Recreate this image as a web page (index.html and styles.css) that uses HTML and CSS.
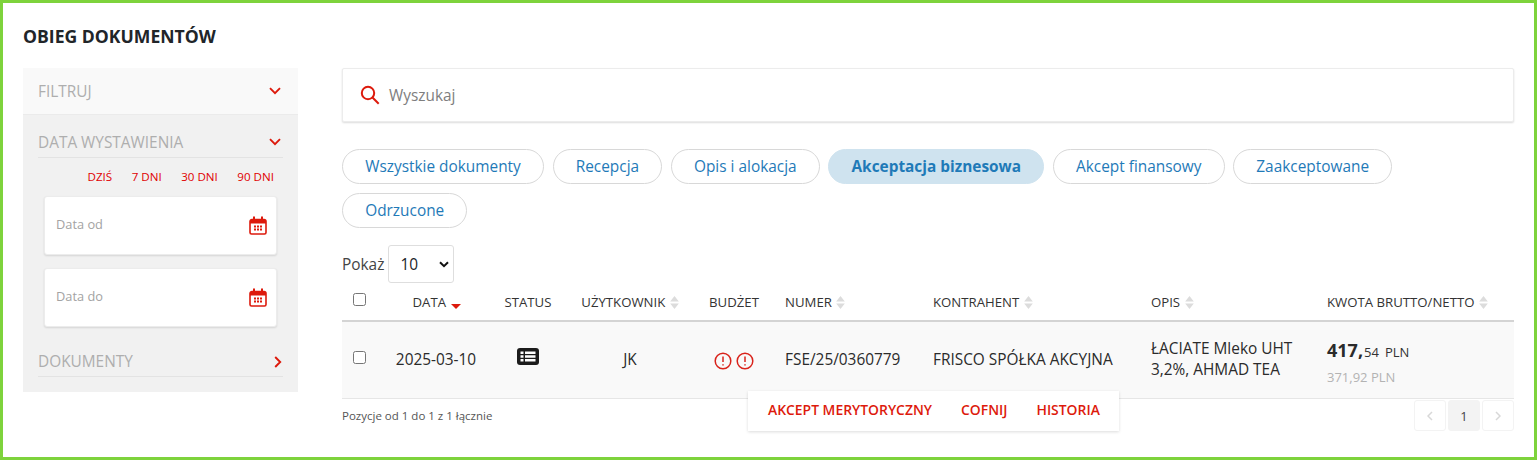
FILE: index.html
```html
<!DOCTYPE html>
<html lang="pl">
<head>
<meta charset="utf-8">
<title>Obieg dokumentów</title>
<link rel="stylesheet" href="styles.css">
</head>
<body>
<div class="frame">
  <h1 class="title">OBIEG DOKUMENTÓW</h1>
  <div class="columns">
    <aside class="sidebar">
      <div class="filter-head">
        <span>FILTRUJ</span>
        <svg class="chev" viewBox="0 0 12 8"><path d="M1 1.200l5 5 5-5" /></svg>
      </div>
      <div class="filter-body">
        <div class="section-head">
          <span>DATA WYSTAWIENIA</span>
          <svg class="chev" viewBox="0 0 12 8"><path d="M1 1.200l5 5 5-5" /></svg>
        </div>
        <div class="quick">
          <a>DZIŚ</a><a>7 DNI</a><a>30 DNI</a><a>90 DNI</a>
        </div>
        <div class="date-box">
          <span>Data od</span>
          <svg class="cal" viewBox="0 0 18 19"><path class="cal-o" d="M1 5.500a2 2 0 0 1 2-2h12a2 2 0 0 1 2 2v11a1.500 1.500 0 0 1-1.500 1.500h-13A1.500 1.500 0 0 1 1 16.500z"/><path class="cal-f" d="M1 4h16v3.500H1zM4 0.500h2v4H4zM12 0.500h2v4h-2zM5 9.500h2v2H5zM8 9.500h2v2H8zM11 9.500h2v2h-2zM5 12.500h2v2H5zM8 12.500h2v2H8zM11 12.500h2v2h-2z"/></svg>
        </div>
        <div class="date-box">
          <span>Data do</span>
          <svg class="cal" viewBox="0 0 18 19"><path class="cal-o" d="M1 5.500a2 2 0 0 1 2-2h12a2 2 0 0 1 2 2v11a1.500 1.500 0 0 1-1.500 1.500h-13A1.500 1.500 0 0 1 1 16.500z"/><path class="cal-f" d="M1 4h16v3.500H1zM4 0.500h2v4H4zM12 0.500h2v4h-2zM5 9.500h2v2H5zM8 9.500h2v2H8zM11 9.500h2v2h-2zM5 12.500h2v2H5zM8 12.500h2v2H8zM11 12.500h2v2h-2z"/></svg>
        </div>
        <div class="section-head docs">
          <span>DOKUMENTY</span>
          <svg class="chev-r" viewBox="0 0 8 12"><path d="M1.200 1l5 5-5 5" /></svg>
        </div>
      </div>
    </aside>
    <main class="main">
      <div class="search">
        <svg class="search-icon" viewBox="0 0 20 20"><circle cx="8" cy="8" r="6.200"/><path d="M12.500 12.500l6.200 6.200"/></svg>
        <span>Wyszukaj</span>
      </div>
      <div class="tabs">
        <a class="tab">Wszystkie dokumenty</a>
        <a class="tab">Recepcja</a>
        <a class="tab">Opis i alokacja</a>
        <a class="tab active">Akceptacja biznesowa</a>
        <a class="tab">Akcept finansowy</a>
        <a class="tab">Zaakceptowane</a>
        <a class="tab">Odrzucone</a>
      </div>
      <div class="length">
        <span>Pokaż</span>
        <div class="select"><span>10</span><svg viewBox="0 0 10 7"><path d="M1 1.200l4 4 4-4"/></svg></div>
      </div>
      <div class="table-wrap">
        <table class="docs-table">
          <colgroup>
            <col class="c1"><col class="c2"><col class="c3"><col class="c4"><col class="c5"><col class="c6"><col class="c7"><col class="c8"><col class="c9">
          </colgroup>
          <thead>
            <tr>
              <th class="first"><span class="check"></span></th>
              <th class="date-h">DATA <svg class="sort-down" viewBox="0 0 10 5"><path d="M0 0h10L5 5z"/></svg></th>
              <th>STATUS</th>
              <th>UŻYTKOWNIK <svg class="sort" viewBox="0 0 8 12"><path d="M4 0l4 5H0zM0 7h8l-4 5z"/></svg></th>
              <th>BUDŻET</th>
              <th class="left">NUMER <svg class="sort" viewBox="0 0 8 12"><path d="M4 0l4 5H0zM0 7h8l-4 5z"/></svg></th>
              <th class="left">KONTRAHENT <svg class="sort" viewBox="0 0 8 12"><path d="M4 0l4 5H0zM0 7h8l-4 5z"/></svg></th>
              <th class="left">OPIS <svg class="sort" viewBox="0 0 8 12"><path d="M4 0l4 5H0zM0 7h8l-4 5z"/></svg></th>
              <th class="left">KWOTA BRUTTO/NETTO <svg class="sort" viewBox="0 0 8 12"><path d="M4 0l4 5H0zM0 7h8l-4 5z"/></svg></th>
            </tr>
          </thead>
          <tbody>
            <tr>
              <td class="first"><span class="check"></span></td>
              <td>2025-03-10</td>
              <td>
                <svg class="status" viewBox="0 0 22 17"><rect width="22" height="17" rx="3"/><path class="status-l" d="M3.500 3.500h3v2.500h-3zM8 3.500h10.500v2.500H8zM3.500 7.300h3v2.500h-3zM8 7.300h10.500v2.500H8zM3.500 11h3v2.500h-3zM8 11h10.500v2.500H8z"/></svg>
              </td>
              <td>JK</td>
              <td>
                <span class="alerts">
                  <svg class="alert" viewBox="0 0 18 18"><circle cx="9" cy="9" r="7.800"/><path d="M9 4.500v5.500M9 12.300v1.300"/></svg>
                  <svg class="alert" viewBox="0 0 18 18"><circle cx="9" cy="9" r="7.800"/><path d="M9 4.500v5.500M9 12.300v1.300"/></svg>
                </span>
              </td>
              <td class="left">FSE/25/0360779</td>
              <td class="left">FRISCO SPÓŁKA AKCYJNA</td>
              <td class="left desc">ŁACIATE Mleko UHT<br>3,2%, AHMAD TEA</td>
              <td class="left amount">
                <div class="gross"><b>417,</b><span class="cents">54</span><span class="cur">PLN</span></div>
                <div class="net">371,92 PLN</div>
              </td>
            </tr>
          </tbody>
        </table>
        <div class="table-foot">
          <span class="info">Pozycje od 1 do 1 z 1 łącznie</span>
          <div class="pager">
            <a class="page"><svg viewBox="0 0 6 10"><path d="M5 1L1 5l4 4"/></svg></a>
            <a class="page current">1</a>
            <a class="page"><svg viewBox="0 0 6 10"><path d="M1 1l4 4-4 4"/></svg></a>
          </div>
        </div>
        <div class="actions">
          <a>AKCEPT MERYTORYCZNY</a><a>COFNIJ</a><a>HISTORIA</a>
        </div>
      </div>
    </main>
  </div>
</div>
</body>
</html>
```

FILE: styles.css
```css
* { box-sizing: border-box; }
html, body { margin: 0; padding: 0; background: #fff; }
body { font-family: "Open Sans", "Liberation Sans", sans-serif; color: #212529; font-size: 15.400px; }

.frame {
  width: 1537px;
  height: 460px;
  border: 3px solid #7ed33c;
  padding: 21px 20px 0 20px;
  overflow: hidden;
}
.title {
  margin: 0;
  font-size: 17.600px;
  line-height: 24px;
  font-weight: 700;
  color: #212529;
}
.columns { display: flex; margin-top: 20px; align-items: flex-start; gap: 44px; }

.sidebar { width: 275px; flex: none; background: #f1f1f1; }
.filter-head {
  height: 47px;
  background: #f9f9f9;
  border-bottom: 1px solid #ebebeb;
  display: flex;
  align-items: center;
  justify-content: space-between;
  padding: 0 17px 0 15px;
  font-size: 15.400px;
  color: #aeaeae;
}
.chev { width: 12px; height: 8px; fill: none; stroke: #dd1a0c; stroke-width: 1.900; }
.chev-r { width: 8px; height: 12px; fill: none; stroke: #dd1a0c; stroke-width: 1.900; }
.filter-body { padding: 0 15px 15px 15px; height: 277px; }
.section-head {
  height: 43px;
  padding-top: 12px;
  border-bottom: 1px solid #e3e3e3;
  display: flex;
  align-items: center;
  justify-content: space-between;
  padding-right: 2px;
  font-size: 15.400px;
  color: #aeaeae;
}
.quick {
  display: flex;
  justify-content: flex-end;
  gap: 19.500px;
  padding: 11px 9px 0 0;
  font-size: 11.600px;
  line-height: 16px;
  color: #e00000;
}
.date-box {
  width: 233px;
  height: 59px;
  margin: 11px 0 0 6px;
  background: #fff;
  border: 1px solid #ececec;
  border-radius: 3px;
  box-shadow: 0 1px 2px rgba(0,0,0,.12);
  display: flex;
  align-items: center;
  justify-content: space-between;
  padding: 0 9px 0 11px;
  font-size: 12.800px;
  color: #a3a3a3;
}
.date-box span { margin-top: -3px; }
.date-box + .date-box { margin-top: 13px; }
.cal { width: 18px; height: 19px; }
.cal-o { fill: #fff; stroke: #dd1a0c; stroke-width: 1.600; }
.cal-f { fill: #dd1a0c; }
.docs { height: 36px; padding-top: 6px; margin-top: 14px; padding-right: 0; }
.docs .chev-r { margin-right: 1px; }

.main { flex: 1; min-width: 0; }
.search {
  height: 54px;
  border: 1px solid #ececec;
  border-radius: 2px;
  box-shadow: 0 1px 2px rgba(0,0,0,.14);
  background: #fff;
  display: flex;
  align-items: center;
  padding-left: 17px;
  gap: 9px;
  font-size: 15.400px;
  color: #7e7e7e;
}
.search-icon { width: 20px; height: 20px; fill: none; stroke: #dd1a0c; stroke-width: 2; }
.tabs { display: flex; flex-wrap: wrap; gap: 9px 8.500px; margin-top: 27px; width: 1100px; }
.tab {
  height: 35px;
  padding: 0 22.200px;
  border: 1px solid #d8d8d8;
  border-radius: 18px;
  display: flex;
  align-items: center;
  font-size: 15.400px;
  color: #1f7ab8;
  background: #fff;
}
.tab.active {
  background: #cfe3ef;
  border-color: #cfe3ef;
  font-weight: 700;
  color: #1f7ab8;
}
.length { display: flex; align-items: center; gap: 4px; margin-top: 17px; font-size: 15.400px; color: #444; }
.select {
  width: 66px;
  height: 38px;
  border: 1px solid #dedede;
  border-radius: 3px;
  display: flex;
  align-items: center;
  justify-content: space-between;
  padding: 0 4px 0 11px;
  color: #212529;
  font-size: 15.400px;
}
.select svg { width: 10px; height: 7px; fill: none; stroke: #111; stroke-width: 2; }

.table-wrap { position: relative; }
.docs-table { width: 1172px; border-collapse: collapse; table-layout: fixed; }
.c1 { width: 34px; } .c2 { width: 120px; } .c3 { width: 64px; } .c4 { width: 140px; }
.c5 { width: 68px; } .c6 { width: 148px; } .c7 { width: 218px; } .c8 { width: 176px; } .c9 { width: 204px; }
.docs-table th {
  height: 38px;
  padding: 0;
  font-size: 13.200px;
  font-weight: 400;
  color: #333;
  text-align: center;
  border-bottom: 2px solid #d4d4d4;
  white-space: nowrap;
  vertical-align: middle;
}
.docs-table td {
  height: 77px;
  padding: 0;
  font-size: 15.400px;
  color: #2b2b2b;
  text-align: center;
  background: #f9f9f9;
  border-bottom: 1px solid #e6e6e6;
  vertical-align: middle;
}
.docs-table .left { text-align: left; padding-left: 17px; }
.docs-table .first { text-align: left; padding-left: 11px; }
.docs-table .date-h { padding-left: 2px; }
.check {
  display: block;
  width: 13px;
  height: 13px;
  background: #fff;
  border: 1px solid #767676;
  border-radius: 2.500px;
}
thead .check { margin-top: -5px; }
tbody .check { margin-top: -4px; }
.sort { width: 9px; height: 13px; fill: #dcdcdc; vertical-align: -2px; margin-left: 1px; }
.sort-down { width: 10px; height: 5px; fill: #dd1a0c; vertical-align: -2px; margin-left: 2px; }
.status { width: 22px; height: 17px; display: block; margin: -6px auto 0; fill: #1c1c1c; }
.status-l { fill: #fff; }
.alerts { display: inline-flex; gap: 4px; vertical-align: middle; margin-top: -1px; }
.alert { width: 18px; height: 18px; fill: none; stroke: #d9231b; stroke-width: 1.500; }
.desc { line-height: 21px; }
.docs-table td.desc { padding-bottom: 2px; }
.gross { line-height: 24px; margin-top: 4px; font-size: 13px; color: #333; }
.gross b { font-size: 18px; font-weight: 700; color: #2b2b2b; }
.cents { margin-left: 1px; }
.cur { margin-left: 6px; }
.net { font-size: 13px; line-height: 18px; margin-top: 4px; color: #b3b3b3; }

.table-foot { display: flex; justify-content: space-between; align-items: center; height: 33px; margin-top: 1px; }
.info { font-size: 11.500px; color: #555; margin-top: -1px; }
.pager { display: flex; gap: 2px; margin-top: -1px; }
.page {
  width: 32px;
  height: 31px;
  border: 1px solid #f3f3f3;
  border-radius: 3px;
  display: flex;
  align-items: center;
  justify-content: center;
  font-size: 12.800px;
  color: #444;
}
.page svg { width: 6px; height: 10px; fill: none; stroke: #d8d8d8; stroke-width: 1.500; }
.page.current { background: #f3f3f3; }
.actions {
  position: absolute;
  left: 406px;
  top: 108px;
  width: 371px;
  height: 40px;
  background: #fff;
  box-shadow: 0 1px 3px rgba(0,0,0,.14);
  display: flex;
  align-items: center;
  gap: 29px;
  padding-left: 20px;
  padding-bottom: 4px;
  font-size: 13.900px;
  font-weight: 600;
  color: #dd1a0c;
}
```
